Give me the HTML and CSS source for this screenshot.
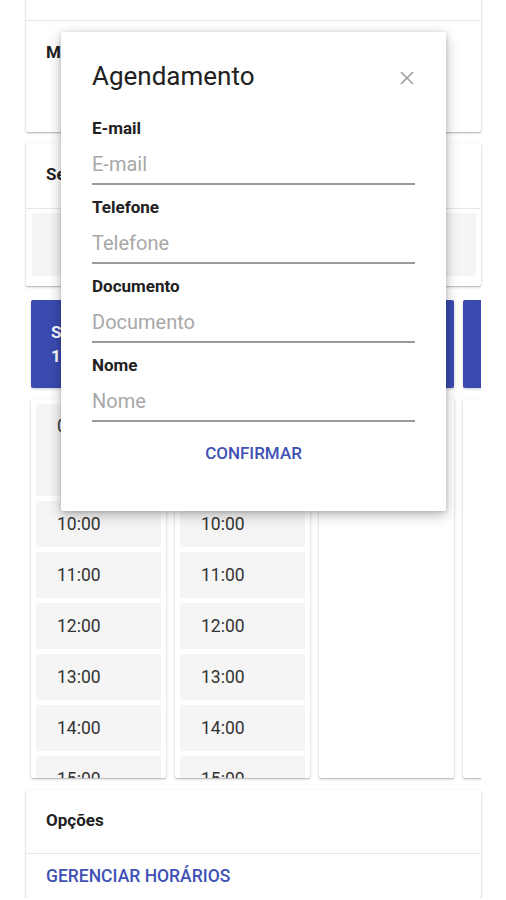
FILE: index.html
```html
<!DOCTYPE html>
<html lang="pt-BR">
<head>
    <meta charset="UTF-8">
    <meta name="viewport" content="width=device-width, initial-scale=1.0">
    <title>Agenda</title>
    <link rel="stylesheet" href="styles.css">
</head>
<body>
    <div class="page">
        <!-- Professional card (scrolled partly off screen) -->
        <div class="card card-top">
            <div class="card-section section-clip"></div>
            <div class="card-section section-tall">
                <div class="card-title">Médico</div>
            </div>
        </div>

        <!-- Service picker -->
        <div class="card">
            <div class="card-section section-head">
                <div class="card-title">Selecione o serviço</div>
            </div>
            <div class="card-section section-picker">
                <div class="picker"></div>
            </div>
        </div>

        <!-- Week columns -->
        <div class="week">
            <div class="day">
                <div class="day-head">
                    <div class="day-name">Seg</div>
                    <div class="day-date">10/06</div>
                </div>
                <div class="day-slots">
                    <div class="slot slot-big">09:00</div>
                    <div class="slot">10:00</div>
                    <div class="slot">11:00</div>
                    <div class="slot">12:00</div>
                    <div class="slot">13:00</div>
                    <div class="slot">14:00</div>
                    <div class="slot">15:00</div>
                </div>
            </div>
            <div class="day">
                <div class="day-head">
                    <div class="day-name">Ter</div>
                    <div class="day-date">11/06</div>
                </div>
                <div class="day-slots">
                    <div class="slot slot-big">09:00</div>
                    <div class="slot">10:00</div>
                    <div class="slot">11:00</div>
                    <div class="slot">12:00</div>
                    <div class="slot">13:00</div>
                    <div class="slot">14:00</div>
                    <div class="slot">15:00</div>
                </div>
            </div>
            <div class="day">
                <div class="day-head">
                    <div class="day-name">Qua</div>
                    <div class="day-date">12/06</div>
                </div>
                <div class="day-slots"></div>
            </div>
            <div class="day">
                <div class="day-head"></div>
                <div class="day-slots"></div>
            </div>
        </div>

        <!-- Options -->
        <div class="card card-options">
            <div class="card-section section-options">
                <div class="card-title">Opções</div>
            </div>
            <div class="card-section section-action">
                <a class="link-action" href="#">GERENCIAR HORÁRIOS</a>
            </div>
        </div>
    </div>

    <!-- Booking dialog -->
    <div class="dialog">
        <div class="dialog-header">
            <h2 class="dialog-title">Agendamento</h2>
            <button class="dialog-close" type="button" aria-label="Fechar">
                <svg width="14" height="14" viewBox="0 0 14 14">
                    <path d="M1 1L13 13M13 1L1 13" stroke="#9e9e9e" stroke-width="1.6" fill="none"/>
                </svg>
            </button>
        </div>
        <form class="dialog-form">
            <div class="field">
                <label for="email">E-mail</label>
                <input type="email" id="email" placeholder="E-mail">
            </div>
            <div class="field">
                <label for="telefone">Telefone</label>
                <input type="text" id="telefone" placeholder="Telefone">
            </div>
            <div class="field">
                <label for="documento">Documento</label>
                <input type="text" id="documento" placeholder="Documento">
            </div>
            <div class="field">
                <label for="nome">Nome</label>
                <input type="text" id="nome" placeholder="Nome">
            </div>
            <div class="dialog-actions">
                <button type="submit" class="btn-confirm">CONFIRMAR</button>
            </div>
        </form>
    </div>
</body>
</html>
```

FILE: styles.css
```css
body {
    margin: 0;
    font-family: Roboto, "Liberation Sans", Arial, sans-serif;
    color: #212121;
    background: #fff;
    overflow: hidden;
}
.page {
    display: flex;
    flex-direction: column;
    padding: 0 25px 0 26px;
}
.card {
    background: #fff;
    border-radius: 2px;
    box-shadow: 0 1px 3px rgba(0, 0, 0, 0.22), 0 1px 1px rgba(0, 0, 0, 0.12);
}
.card + .card {
    margin-top: 11px;
}
.card-top {
    margin-top: -10px;
}
.card-section + .card-section {
    border-top: 1px solid #e6e6e6;
}
.card-title {
    font-size: 17px;
    line-height: 20px;
    font-weight: 700;
}
.section-clip {
    height: 30px;
}
.section-tall {
    padding: 21px 20px 70px;
}
.section-head {
    padding: 21px 20px 24px;
}
.section-picker {
    padding: 4px 5px 10px 6px;
}
.picker {
    height: 63px;
    background: #f5f5f5;
}

/* week columns */
.week {
    display: flex;
    gap: 9px;
    margin-top: 14px;
    padding: 0 0 4px 5px;
    overflow: hidden;
}
.day {
    flex: 0 0 135px;
    display: flex;
    flex-direction: column;
}
.day-head {
    height: 88px;
    box-sizing: border-box;
    padding: 22px 20px 0;
    background: #3a4ab0;
    color: #fff;
    border-radius: 2px;
    font-size: 17px;
    font-weight: 700;
    box-shadow: 0 1px 3px rgba(0, 0, 0, 0.2);
}
.day-name {
    line-height: 20px;
}
.day-date {
    line-height: 28px;
}
.day-slots {
    margin-top: 11px;
    height: 379px;
    box-sizing: border-box;
    padding: 5px;
    display: flex;
    flex-direction: column;
    gap: 5px;
    overflow: hidden;
    background: #fff;
    border-radius: 2px;
    box-shadow: 0 1px 3px rgba(0, 0, 0, 0.22), 0 1px 1px rgba(0, 0, 0, 0.12);
}
.slot {
    flex: 0 0 46px;
    box-sizing: border-box;
    padding: 13px 21px 0;
    background: #f5f5f5;
    font-size: 17.5px;
    line-height: 20px;
    color: #333;
}
.slot-big {
    flex-basis: 92px;
    padding-top: 12px;
}

/* options */
.card.card-options {
    margin-top: 8px;
}
.section-options {
    padding: 20px 20px 23px;
}
.section-action {
    padding: 12px 20px;
}
.link-action {
    display: block;
    font-size: 17.5px;
    line-height: 20px;
    font-weight: 500;
    color: #3f51b5;
    text-decoration: none;
}

/* dialog */
.dialog {
    position: absolute;
    top: 32px;
    left: 61px;
    width: 385px;
    box-sizing: border-box;
    padding: 28px 31px 40px;
    background: #fff;
    border-radius: 2px;
    box-shadow: 0 4px 14px rgba(0, 0, 0, 0.26), 0 1px 4px rgba(0, 0, 0, 0.16);
}
.dialog-header {
    display: flex;
    align-items: center;
    justify-content: space-between;
}
.dialog-title {
    margin: 0;
    font-size: 26px;
    line-height: 32px;
    font-weight: 400;
    color: #212121;
}
.dialog-close {
    border: none;
    background: none;
    padding: 0;
    margin: 4px 1px 0 0;
    width: 14px;
    height: 14px;
    display: flex;
    cursor: pointer;
}
.dialog-form {
    margin-top: 26px;
}
.field + .field {
    margin-top: 12px;
}
.field label {
    display: block;
    font-size: 17px;
    line-height: 20px;
    font-weight: 700;
    color: #212121;
}
.field input {
    display: block;
    width: 100%;
    height: 40px;
    margin-top: 7px;
    padding: 0;
    box-sizing: border-box;
    border: none;
    border-bottom: 2px solid #9a9a9a;
    font-family: Roboto, "Liberation Sans", Arial, sans-serif;
    font-size: 20px;
    color: #212121;
    outline: none;
    background: transparent;
}
.field input::placeholder {
    color: #a8a8a8;
}
.dialog-actions {
    display: flex;
    justify-content: center;
    margin-top: 13px;
}
.btn-confirm {
    height: 36px;
    padding: 0 16px;
    border: none;
    background: none;
    font-family: Roboto, "Liberation Sans", Arial, sans-serif;
    font-size: 17px;
    font-weight: 500;
    color: #3f51b5;
    cursor: pointer;
}
```
